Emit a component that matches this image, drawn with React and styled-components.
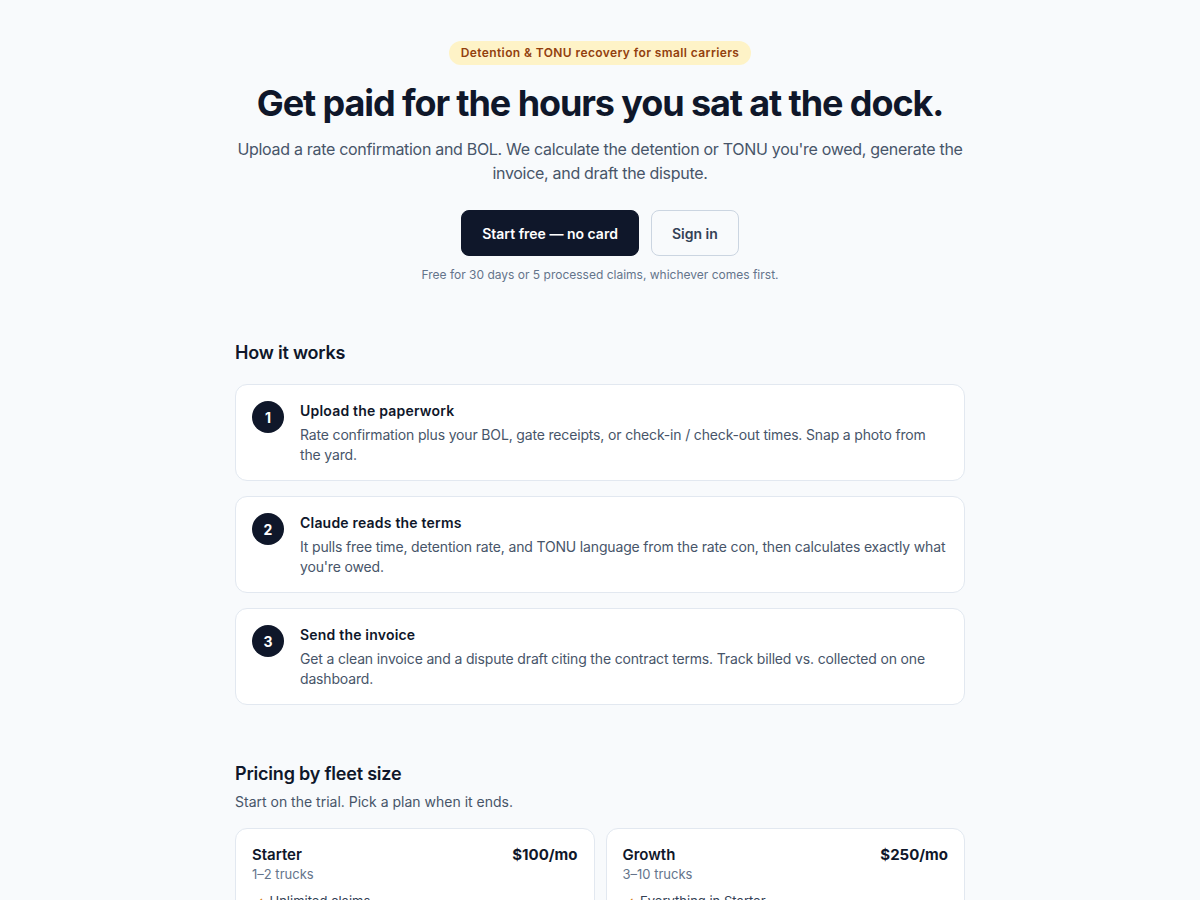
import React from "react";
import styled, { createGlobalStyle } from "styled-components";

const Global = createGlobalStyle`
  html, body { margin: 0; padding: 0; background: #f8fafc; }
  body { font-family: Inter, "Noto Sans", "Liberation Sans", sans-serif; color: #0f172a; -webkit-font-smoothing: antialiased; }
  * { box-sizing: border-box; }
`;

const Page = styled.main`
  width: 730px;
  margin: 0 auto;
  padding: 41px 0 40px;
`;

const Hero = styled.section`
  display: flex;
  flex-direction: column;
  align-items: center;
  text-align: center;
`;

const Badge = styled.span`
  display: inline-block;
  height: 24px;
  line-height: 24px;
  padding: 0 12px;
  border-radius: 999px;
  background: #fef3c7;
  color: #92400e;
  font-size: 12px;
  font-weight: 600;
  letter-spacing: 0.4px;
`;

const Title = styled.h1`
  margin: 16px 0 0;
  font-size: 36px;
  line-height: 44px;
  font-weight: 700;
  letter-spacing: -1.1px;
  color: #0f172a;
`;

const Lead = styled.p`
  margin: 12px 0 0;
  font-size: 16px;
  line-height: 24px;
  color: #475569;
  letter-spacing: -0.3px;
`;

const Actions = styled.div`
  display: flex;
  gap: 12px;
  margin-top: 25px;
`;

const Button = styled.button`
  height: 46px;
  padding: 0 20px;
  border-radius: 8px;
  font-family: inherit;
  font-size: 14px;
  font-weight: 600;
  cursor: pointer;
  border: 1px solid ${(p) => (p.$primary ? "#0f172a" : "#cbd5e1")};
  background: ${(p) => (p.$primary ? "#0f172a" : "#f8fafc")};
  color: ${(p) => (p.$primary ? "#ffffff" : "#334155")};
`;

const Fine = styled.p`
  margin: 11px 0 0;
  font-size: 12px;
  line-height: 16px;
  color: #64748b;
`;

const Section = styled.section`
  margin-top: ${(p) => p.$top || 56}px;
`;

const H2 = styled.h2`
  margin: 0;
  font-size: 18px;
  line-height: 28px;
  font-weight: 600;
  color: #0f172a;
  letter-spacing: -0.2px;
`;

const Sub = styled.p`
  margin: 4px 0 0;
  font-size: 14px;
  line-height: 20px;
  color: #475569;
`;

const Steps = styled.div`
  display: flex;
  flex-direction: column;
  gap: 15px;
  margin-top: 17px;
`;

const Card = styled.div`
  background: #ffffff;
  border: 1px solid #e2e8f0;
  border-radius: 12px;
  padding: 16px 16px 15px;
`;

const StepCard = styled(Card)`
  display: flex;
  gap: 16px;
  align-items: flex-start;
`;

const Num = styled.div`
  flex: none;
  width: 32px;
  height: 32px;
  border-radius: 50%;
  background: #0f172a;
  color: #fff;
  display: flex;
  align-items: center;
  justify-content: center;
  font-size: 14px;
  font-weight: 700;
`;

const StepBody = styled.div``;

const StepTitle = styled.div`
  font-size: 14px;
  line-height: 20px;
  font-weight: 600;
  letter-spacing: 0.2px;
  color: #0f172a;
`;

const StepText = styled.div`
  margin-top: 4px;
  font-size: 14px;
  line-height: 20px;
  letter-spacing: -0.16px;
  color: #475569;
`;

const Plans = styled.div`
  display: grid;
  grid-template-columns: 1fr 1fr;
  gap: 11px;
  margin-top: 16px;
`;

const PlanHead = styled.div`
  display: flex;
  justify-content: space-between;
  align-items: baseline;
`;

const PlanName = styled.div`
  font-size: 15px;
  line-height: 20px;
  font-weight: 600;
  color: #0f172a;
`;

const Price = styled.div`
  font-size: 15px;
  line-height: 20px;
  font-weight: 700;
  color: #0f172a;
`;

const Trucks = styled.div`
  font-size: 13px;
  line-height: 18px;
  color: #64748b;
`;

const Features = styled.ul`
  list-style: none;
  margin: 10px 0 0;
  padding: 0;
  display: flex;
  flex-direction: column;
  gap: 6px;
`;

const Feature = styled.li`
  display: flex;
  gap: 6px;
  font-size: 13px;
  line-height: 16px;
  color: #334155;
  &::before {
    content: "✓";
    color: #d97706;
  }
`;

const steps = [
  {
    t: "Upload the paperwork",
    d: "Rate confirmation plus your BOL, gate receipts, or check-in / check-out times. Snap a photo from the yard.",
  },
  {
    t: "Claude reads the terms",
    d: "It pulls free time, detention rate, and TONU language from the rate con, then calculates exactly what you're owed.",
  },
  {
    t: "Send the invoice",
    d: "Get a clean invoice and a dispute draft citing the contract terms. Track billed vs. collected on one dashboard.",
  },
];

const plans = [
  { name: "Starter", price: "$100/mo", trucks: "1–2 trucks", features: ["Unlimited claims", "Invoice + dispute drafts", "Billed vs. collected dashboard"] },
  { name: "Growth", price: "$250/mo", trucks: "3–10 trucks", features: ["Everything in Starter", "Multiple drivers", "Priority support"] },
];

export default function App() {
  return (
    <>
      <Global />
      <Page>
        <Hero>
          <Badge>Detention &amp; TONU recovery for small carriers</Badge>
          <Title>Get paid for the hours you sat at the dock.</Title>
          <Lead>
            Upload a rate confirmation and BOL. We calculate the detention or TONU you're owed, generate the
            invoice, and draft the dispute.
          </Lead>
          <Actions>
            <Button $primary>Start free — no card</Button>
            <Button>Sign in</Button>
          </Actions>
          <Fine>Free for 30 days or 5 processed claims, whichever comes first.</Fine>
        </Hero>

        <Section>
          <H2>How it works</H2>
          <Steps>
            {steps.map((s, i) => (
              <StepCard key={s.t}>
                <Num>{i + 1}</Num>
                <StepBody>
                  <StepTitle>{s.t}</StepTitle>
                  <StepText>{s.d}</StepText>
                </StepBody>
              </StepCard>
            ))}
          </Steps>
        </Section>

        <Section $top={55}>
          <H2>Pricing by fleet size</H2>
          <Sub>Start on the trial. Pick a plan when it ends.</Sub>
          <Plans>
            {plans.map((p) => (
              <Card key={p.name}>
                <PlanHead>
                  <PlanName>{p.name}</PlanName>
                  <Price>{p.price}</Price>
                </PlanHead>
                <Trucks>{p.trucks}</Trucks>
                <Features>
                  {p.features.map((f) => (
                    <Feature key={f}>{f}</Feature>
                  ))}
                </Features>
              </Card>
            ))}
          </Plans>
        </Section>
      </Page>
    </>
  );
}
